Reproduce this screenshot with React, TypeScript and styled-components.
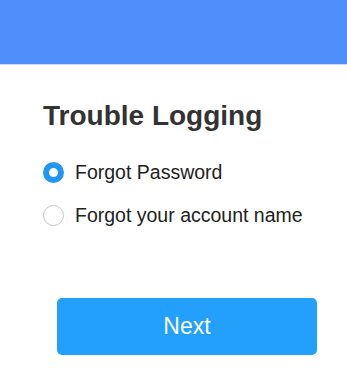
import React, {useState} from 'react';
import styled, {createGlobalStyle} from 'styled-components';

const GlobalStyle = createGlobalStyle`
  body {
    margin: 0;
    background: #ffffff;
    font-family: "Liberation Sans", Arial, sans-serif;
  }
`

const options = ['Forgot Password', 'Forgot your account name']

export default function App() {
    const [selected, setSelected] = useState(0)

    return (
        <Page>
            <GlobalStyle/>
            <Header/>
            <Content>
                <Title>Trouble Logging</Title>
                <Options>
                    {options.map((o, i) =>
                        <Option key={o} onClick={() => setSelected(i)}>
                            <Radio checked={selected === i}/>
                            <Label>{o}</Label>
                        </Option>
                    )}
                </Options>
                <NextButton>Next</NextButton>
            </Content>
        </Page>
    )
}

const Page = styled.div`
  width: 347px;
  height: 387px;
  background: #fff;
`
const Header = styled.div`
  height: 64px;
  background-color: #4e8ffc;
  border-bottom: 1px solid #c9dcfb;
`
const Content = styled.div`
  display: flex;
  flex-direction: column;
  padding: 35px 0 0 43px;
`
const Title = styled.div`
  font-size: 28px;
  font-weight: bold;
  color: #333;
  line-height: 32px;
`
const Options = styled.div`
  display: flex;
  flex-direction: column;
  gap: 22px;
  margin-top: 30px;
`
const Option = styled.div`
  display: flex;
  align-items: center;
  gap: 11px;
  height: 21px;
  cursor: pointer;
`
const Radio = styled.div<{checked: boolean}>`
  box-sizing: border-box;
  flex-shrink: 0;
  width: 21px;
  height: 21px;
  border-radius: 50%;
  background: #fff;
  border: ${props => props.checked ? '6.5px solid #2196f3' : '1px solid #c4c8d0'};
`
const Label = styled.div`
  font-size: 19.5px;
  color: #222;
`
const NextButton = styled.button`
  margin: 72px 0 0 14px;
  width: 260px;
  height: 57px;
  border: none;
  border-radius: 5px;
  background-color: #22a0fb;
  color: #fff;
  font-family: "Liberation Sans", Arial, sans-serif;
  font-size: 23px;
  cursor: pointer;
`
